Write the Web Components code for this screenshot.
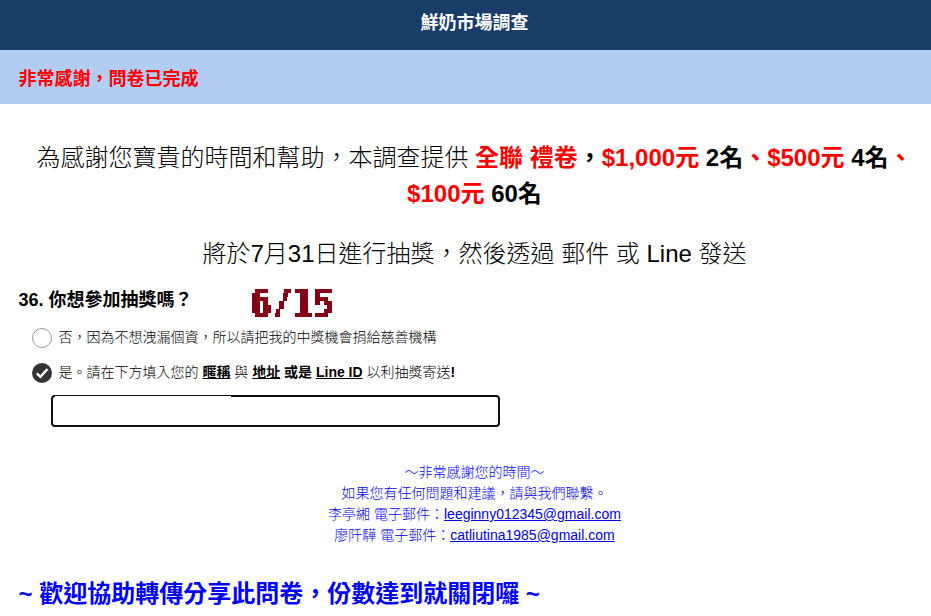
<!DOCTYPE html>
<html lang="zh-Hant">
<head>
<meta charset="utf-8">
<title>鮮奶市場調查</title>
<style>
  body {
    margin: 0;
    background: #fff;
    color: #000;
    font-family: "Liberation Sans", "Noto Sans CJK TC", sans-serif;
    overflow: hidden;
  }
  b { font-weight: 700; }
  em { color: #f00; font-style: normal; }
</style>
</head>
<body>
<survey-page>
  <survey-header slot="header">鮮奶市場調查</survey-header>
  <survey-notice slot="notice">非常感謝，問卷已完成</survey-notice>
  <survey-intro>為感謝您寶貴的時間和幫助，本調查提供 <b><em>全聯 禮卷</em>，<em>$1,000元</em> 2名<em>、$500元</em> 4名<em>、</em><br><em>$100元</em> 60名</b></survey-intro>
  <survey-intro>將於7月31日進行抽獎，然後透過 郵件 或 Line 發送</survey-intro>
  <survey-question>
    <span slot="title">36. 你想參加抽獎嗎？</span>
    <pixel-note slot="note" text="6/15"></pixel-note>
    <survey-option>否，因為不想洩漏個資，所以請把我的中獎機會捐給慈善機構</survey-option>
    <survey-option checked>是。請在下方填入您的 <b><u>暱稱</u></b> 與 <b><u>地址</u> 或是 <u>Line ID</u></b> 以利抽獎寄送<b>!</b></survey-option>
    <survey-input></survey-input>
  </survey-question>
  <survey-contact>
    <div>～非常感謝您的時間～</div>
    <div>如果您有任何問題和建議，請與我們聯繫。</div>
    <div>李亭緗 電子郵件：<contact-link>leeginny012345@gmail.com</contact-link></div>
    <div>廖阡驊 電子郵件：<contact-link>catliutina1985@gmail.com</contact-link></div>
  </survey-contact>
  <survey-share>~ 歡迎協助轉傳分享此問卷，份數達到就關閉囉 ~</survey-share>
</survey-page>

<script>
class SurveyElement extends HTMLElement {
  constructor() {
    super();
    this.attachShadow({ mode: "open" });
  }

  connectedCallback() {
    this.shadowRoot.innerHTML = this.render();
  }
}

customElements.define("survey-page", class extends SurveyElement {
  render() {
    return `
      <style>
        :host { display: block; height: 616px; overflow: hidden; }
        main { display: flex; flex-direction: column; padding: 36px 0 0 18px; }
      </style>
      <slot name="header"></slot>
      <slot name="notice"></slot>
      <main><slot></slot></main>
    `;
  }
});

customElements.define("survey-header", class extends SurveyElement {
  render() {
    return `
      <style>
        :host {
          display: block;
          box-sizing: border-box;
          height: 50px;
          padding-left: 18px;
          background: #193d69;
          color: #fff;
          font-size: 18px;
          font-weight: 700;
          line-height: 46px;
          text-align: center;
        }
      </style>
      <slot></slot>
    `;
  }
});

customElements.define("survey-notice", class extends SurveyElement {
  render() {
    return `
      <style>
        :host {
          display: block;
          height: 54px;
          padding-left: 18.5px;
          background: #b3cdf2;
          color: #f00;
          font-size: 18px;
          font-weight: 700;
          line-height: 58px;
        }
      </style>
      <slot></slot>
    `;
  }
});

customElements.define("survey-intro", class extends SurveyElement {
  render() {
    return `
      <style>
        :host {
          display: block;
          margin-bottom: 24px;
          font-size: 24px;
          font-weight: 300;
          line-height: 36px;
          text-align: center;
          white-space: nowrap;
        }
      </style>
      <slot></slot>
    `;
  }
});

customElements.define("survey-question", class extends SurveyElement {
  render() {
    return `
      <style>
        :host { display: block; margin-top: -11px; }
        .head { display: flex; height: 42px; line-height: 30px; }
        .title { width: 233px; padding-left: 0.5px; font-size: 18px; font-weight: 700; white-space: nowrap; }
      </style>
      <div class="head">
        <div class="title"><slot name="title"></slot></div>
        <slot name="note"></slot>
      </div>
      <slot></slot>
    `;
  }
});

// text snapped to a 4px grid: one sample per cell, spread over the cell
customElements.define("pixel-note", class extends SurveyElement {
  render() {
    return `
      <style>
        :host { display: block; margin-top: 4px; height: 28px; }
        svg { display: block; width: 84px; height: 28px; overflow: visible; }
        text { font: 700 38.4px "DejaVu Sans Mono", monospace; fill: #870014; }
      </style>
      <svg viewBox="0 0 80 28" preserveAspectRatio="none">
        <filter id="cells" filterUnits="userSpaceOnUse" x="0" y="0" width="80" height="28" color-interpolation-filters="sRGB">
          <feFlood x="1" y="2" width="1" height="1" flood-color="#000"/>
          <feOffset x="0" y="0" width="4" height="4" dx="0" dy="0"/>
          <feTile result="grid"/>
          <feComposite in="SourceGraphic" in2="grid" operator="in"/>
          <feComponentTransfer result="a">
            <feFuncA type="discrete" tableValues="0 1"/>
          </feComponentTransfer>
          <feOffset dx="1" result="a1"/>
          <feMerge result="b"><feMergeNode in="a"/><feMergeNode in="a1"/></feMerge>
          <feOffset dx="-2" result="b1"/>
          <feMerge result="c"><feMergeNode in="b"/><feMergeNode in="b1"/></feMerge>
          <feOffset dy="1" result="c1"/>
          <feMerge result="d"><feMergeNode in="c"/><feMergeNode in="c1"/></feMerge>
          <feOffset dy="-2" result="d1"/>
          <feMerge><feMergeNode in="d"/><feMergeNode in="d1"/></feMerge>
        </filter>
        <g filter="url(#cells)">
          <text x="-1" y="28" textLength="80" lengthAdjust="spacingAndGlyphs">${this.getAttribute("text")}</text>
        </g>
      </svg>
    `;
  }
});

customElements.define("survey-option", class extends SurveyElement {
  render() {
    const icon = this.hasAttribute("checked")
      ? `<circle cx="10" cy="10" r="10" fill="#333"/>
         <path d="M4.8 10.3 8.4 13.8 15.5 6" fill="none" stroke="#fff" stroke-width="2.5"/>`
      : `<circle cx="10" cy="10" r="9.5" fill="#fff" stroke="#999"/>`;
    return `
      <style>
        :host {
          display: flex;
          gap: 6.5px;
          height: 35px;
          padding-left: 14px;
          font-size: 14px;
          font-weight: 300;
          line-height: 21px;
          white-space: nowrap;
        }
        svg { flex: none; width: 20px; height: 20px; margin-top: 1px; }
      </style>
      <svg viewBox="0 0 20 20">${icon}</svg>
      <div><slot></slot></div>
    `;
  }
});

customElements.define("survey-input", class extends SurveyElement {
  render() {
    return `
      <style>
        :host { display: block; position: relative; margin: -2px 0 0 33px; width: 449px; height: 32px; }
        input {
          display: block;
          box-sizing: border-box;
          width: 100%;
          height: 100%;
          margin: 0;
          border: 2px solid #101010;
          border-radius: 4px;
          outline: none;
          background: #fff;
        }
        /* the top border is thinner over the first part of the field */
        :host::after {
          content: "";
          position: absolute;
          top: 1px;
          left: 4px;
          width: 176px;
          height: 2px;
          background: #fff;
        }
      </style>
      <input type="text">
    `;
  }
});

customElements.define("survey-contact", class extends SurveyElement {
  render() {
    return `
      <style>
        :host {
          display: block;
          margin-top: 35px;
          color: #00f;
          font-size: 14px;
          font-weight: 300;
          line-height: 21px;
          text-align: center;
        }
      </style>
      <slot></slot>
    `;
  }
});

customElements.define("contact-link", class extends SurveyElement {
  render() {
    return `<style>
        :host { display: inline; }
        a { color: #00e; text-decoration: underline; }
      </style><a href="mailto:${this.textContent}"><slot></slot></a>`;
  }
});

customElements.define("survey-share", class extends SurveyElement {
  render() {
    return `
      <style>
        :host {
          display: block;
          margin-top: 30px;
          padding-left: 0.5px;
          color: #00f;
          font-size: 24px;
          font-weight: 700;
          line-height: 36px;
          white-space: nowrap;
        }
      </style>
      <slot></slot>
    `;
  }
});
</script>
</body>
</html>
